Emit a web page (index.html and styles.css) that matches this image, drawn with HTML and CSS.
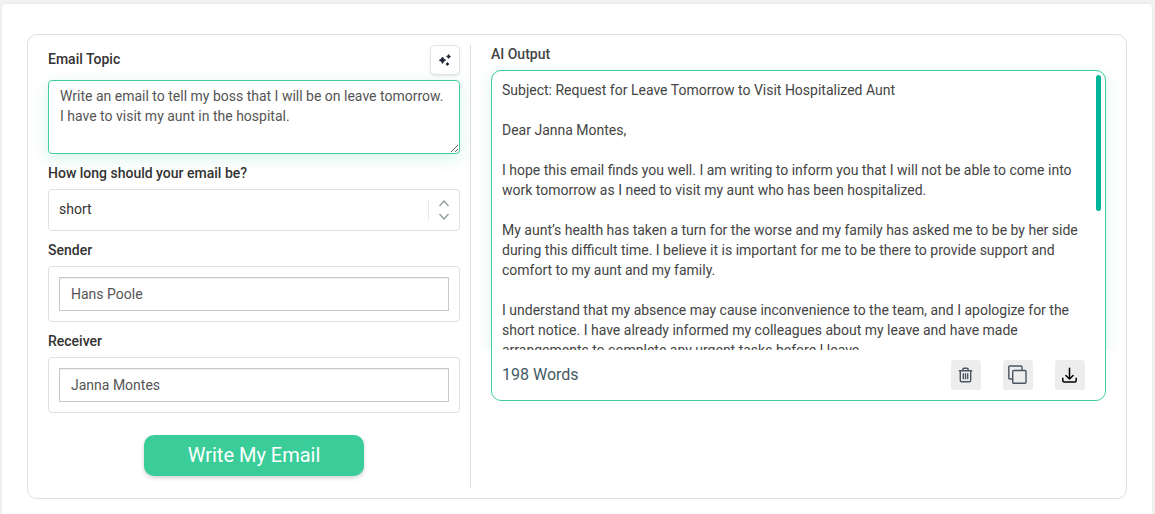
FILE: index.html
```html
<!DOCTYPE html>
<html lang="en">
<head>
<meta charset="utf-8">
<meta name="viewport" content="width=device-width, initial-scale=1">
<title>Email Writer</title>
<link rel="stylesheet" href="styles.css">
</head>
<body>
<main class="card">
  <div class="panel">
    <form class="form">
      <div class="topic-head">
        <label class="label" for="topic">Email Topic</label>
        <button class="sparkle" type="button" aria-label="Suggest a topic">
          <svg width="14" height="14" viewBox="0 0 14 14" fill="#1f2639" aria-hidden="true">
            <path d="M4.500 4 Q5.100 6.600 7.600 7.200 Q5.100 7.800 4.500 10.400 Q3.900 7.800 1.400 7.200 Q3.900 6.600 4.500 4Z" stroke="#1f2639" stroke-width="1"/>
            <path d="M10.600 1.500 Q11 3.100 12.600 3.500 Q11 3.900 10.600 5.500 Q10.200 3.900 8.600 3.500 Q10.200 3.100 10.600 1.500Z" stroke="#1f2639" stroke-width=".8"/>
            <path d="M9.400 9.500 L10.900 11 L9.400 12.500 L7.900 11Z" stroke="#1f2639" stroke-width=".8" stroke-linejoin="round"/>
          </svg>
        </button>
      </div>
      <textarea class="topic" id="topic">Write an email to tell my boss that I will be on leave tomorrow. I have to visit my aunt in the hospital.</textarea>

      <label class="label" for="length">How long should your email be?</label>
      <div class="select-box">
        <select class="select" id="length">
          <option>short</option>
          <option>medium</option>
          <option>long</option>
        </select>
        <svg class="arrows" width="16" height="22" viewBox="0 0 16 22" fill="none" stroke="#8c9b9b" stroke-width="1.300" aria-hidden="true">
          <path d="M3.500 7 L8 2 L12.500 7M3.500 15 L8 20 L12.500 15"/>
        </svg>
      </div>

      <label class="label" for="sender">Sender</label>
      <div class="input-box"><input class="input" id="sender" type="text" value="Hans Poole"></div>

      <label class="label" for="receiver">Receiver</label>
      <div class="input-box"><input class="input" id="receiver" type="text" value="Janna Montes"></div>

      <button class="submit" type="button">Write My Email</button>
    </form>

    <section class="output">
      <h2 class="output-title">AI Output</h2>
      <div class="result">
        <div class="message">
          <p>Subject: Request for Leave Tomorrow to Visit Hospitalized Aunt</p>
          <p>Dear Janna Montes,</p>
          <p>I hope this email finds you well. I am writing to inform you that I will not be able to come into work tomorrow as I need to visit my aunt who has been hospitalized.</p>
          <p>My aunt’s health has taken a turn for the worse and my family has asked me to be by her side during this difficult time. I believe it is important for me to be there to provide support and comfort to my aunt and my family.</p>
          <p>I understand that my absence may cause inconvenience to the team, and I apologize for the short notice. I have already informed my colleagues about my leave and have made arrangements to complete any urgent tasks before I leave.</p>
          <span class="thumb"></span>
        </div>
        <div class="footer">
          <span class="count">198 Words</span>
          <div class="tools">
            <button class="tool" type="button" aria-label="Delete">
              <svg width="16" height="16" viewBox="0 0 16 16" fill="none" stroke="#4b5563" stroke-width="1.400" aria-hidden="true">
                <path d="M.8 3.700H14.200M4.800 3.500V2.500Q4.800 1.200 6.100 1.200H8.900Q10.200 1.200 10.200 2.500V3.500M2.300 4V13.500Q2.300 14.800 3.600 14.800H11.400Q12.700 14.800 12.700 13.500V4M5.300 6.300V12.300M7.500 6.300V12.300M9.700 6.300V12.300"/>
              </svg>
            </button>
            <button class="tool" type="button" aria-label="Copy">
              <svg width="20" height="20" viewBox="0 0 20 20" fill="none" stroke="#4b5563" stroke-width="1.400" stroke-linejoin="round" aria-hidden="true">
                <rect x="4.700" y="5.500" width="13.300" height="12.800" rx="1"/>
                <path d="M4.500 14H1.700Q.8 14 .8 13V2Q.8 1 1.700 1H13Q14 1 14 2V5"/>
              </svg>
            </button>
            <button class="tool" type="button" aria-label="Download">
              <svg width="16" height="16" viewBox="0 0 16 16" fill="none" stroke="#000" stroke-width="1.500" stroke-linecap="round" stroke-linejoin="round" aria-hidden="true">
                <path d="M7.500 1.200V12M3.900 8.500L7.500 12L11.100 8.500M.8 11.200V13.500Q.8 15 2.300 15H12.700Q14.200 15 14.200 13.500V11.200"/>
              </svg>
            </button>
          </div>
        </div>
      </div>
    </section>
  </div>
</main>
</body>
</html>
```
FILE: styles.css
```css
* { box-sizing: border-box; }

body {
  margin: 0;
  padding: 4px 3px 0 2px;
  background: #f2f2f2;
  color: #444;
  font: 14px/20px Roboto, "Liberation Sans", sans-serif;
}

button, input, select, textarea {
  margin: 0;
  font: inherit;
  color: inherit;
}

button { cursor: pointer; }

.card {
  min-height: calc(100vh - 4px);
  padding: 30px 25px 15px;
  border-radius: 4px 4px 0 0;
  background: #fff;
  box-shadow: 0 0 4px rgba(0, 0, 0, .05);
}

.panel {
  display: grid;
  grid-template-columns: 443fr 655fr;
  padding: 10px 0;
  border: 1px solid #dedede;
  border-radius: 10px;
}

.form {
  display: flex;
  flex-direction: column;
  padding: 0 10px 12px 20px;
  border-right: 1px solid #dedede;
}

.label {
  margin: 9px 0 6px;
  color: #333;
  font-weight: 500;
}

.topic-head {
  display: flex;
  align-items: center;
  justify-content: space-between;
  margin-bottom: 5px;
}

.topic-head .label { margin: 0 0 2px; }

.sparkle {
  display: grid;
  place-items: center;
  width: 30px;
  height: 30px;
  padding: 0;
  border: 1px solid #e4e4e4;
  border-radius: 5px;
  background: #fff;
  box-shadow: 0 1px 3px rgba(0, 0, 0, .1);
}

.topic {
  display: block;
  width: 100%;
  height: 74px;
  padding: 5px 11px;
  border: 1px solid #3dce9a;
  border-radius: 4px;
  outline: none;
  background: #fff;
  color: #555;
  box-shadow: 0 4px 16px rgba(61, 206, 154, .22);
}

.select-box { position: relative; }

.select {
  display: block;
  width: 100%;
  height: 42px;
  padding: 0 40px 2px 10px;
  border: 1px solid #e0e0e0;
  border-radius: 4px;
  appearance: none;
  background: #fff;
  color: #333;
}

.arrows {
  position: absolute;
  top: 10px;
  right: 8px;
  pointer-events: none;
}

.select-box::after {
  content: "";
  position: absolute;
  top: 11px;
  right: 31px;
  width: 1px;
  height: 20px;
  background: #e8e8e8;
}

.input-box {
  padding: 10px;
  border: 1px solid #e0e0e0;
  border-radius: 4px;
}

.input {
  display: block;
  width: 100%;
  height: 34px;
  padding: 6px 11px;
  border: 1px solid #c8c8c8;
  border-radius: 0;
  background: #fff;
  color: #555;
  box-shadow: inset 0 1px 1px rgba(0, 0, 0, .07);
}

.submit {
  align-self: center;
  width: 220px;
  height: 41px;
  margin-top: 22px;
  padding: 0 0 2px;
  border: 0;
  border-radius: 10px;
  background: #3bcd99;
  color: #fff;
  font-size: 20px;
  box-shadow: 0 2px 4px rgba(0, 0, 0, .18);
}

.output { padding: 0 20px; }

.output-title {
  margin: 0 0 7px;
  color: #444;
  font-size: 14px;
  font-weight: 500;
  line-height: 18px;
}

.result {
  position: relative;
  border: 1px solid #3dce9a;
  border-radius: 10px;
}

/* Glow around the message area only, not the footer */
.result::before {
  content: "";
  position: absolute;
  inset: 0 0 50px;
  border-radius: 10px 10px 0 0;
  box-shadow: 0 4px 16px rgba(61, 206, 154, .22);
  clip-path: inset(-20px -20px 0 -20px);
  pointer-events: none;
}

.message {
  position: relative;
  height: 279px;
  padding: 9px 20px 0 10px;
  overflow: hidden;
  border-radius: 10px 10px 0 0;
}

.message p { margin: 0 0 20px; }

.thumb {
  position: absolute;
  top: 4px;
  right: 4px;
  width: 5px;
  height: 136px;
  border-radius: 3px;
  background: #00b598;
}

.footer {
  display: flex;
  align-items: center;
  justify-content: space-between;
  height: 50px;
  padding: 0 20px 0 10px;
}

.count {
  color: #455a64;
  font-size: 16px;
}

.tools {
  display: flex;
  gap: 22px;
}

.tool {
  display: grid;
  place-items: center;
  width: 30px;
  height: 30px;
  padding: 0;
  border: 0;
  border-radius: 3px;
  background: #ededed;
}
```
